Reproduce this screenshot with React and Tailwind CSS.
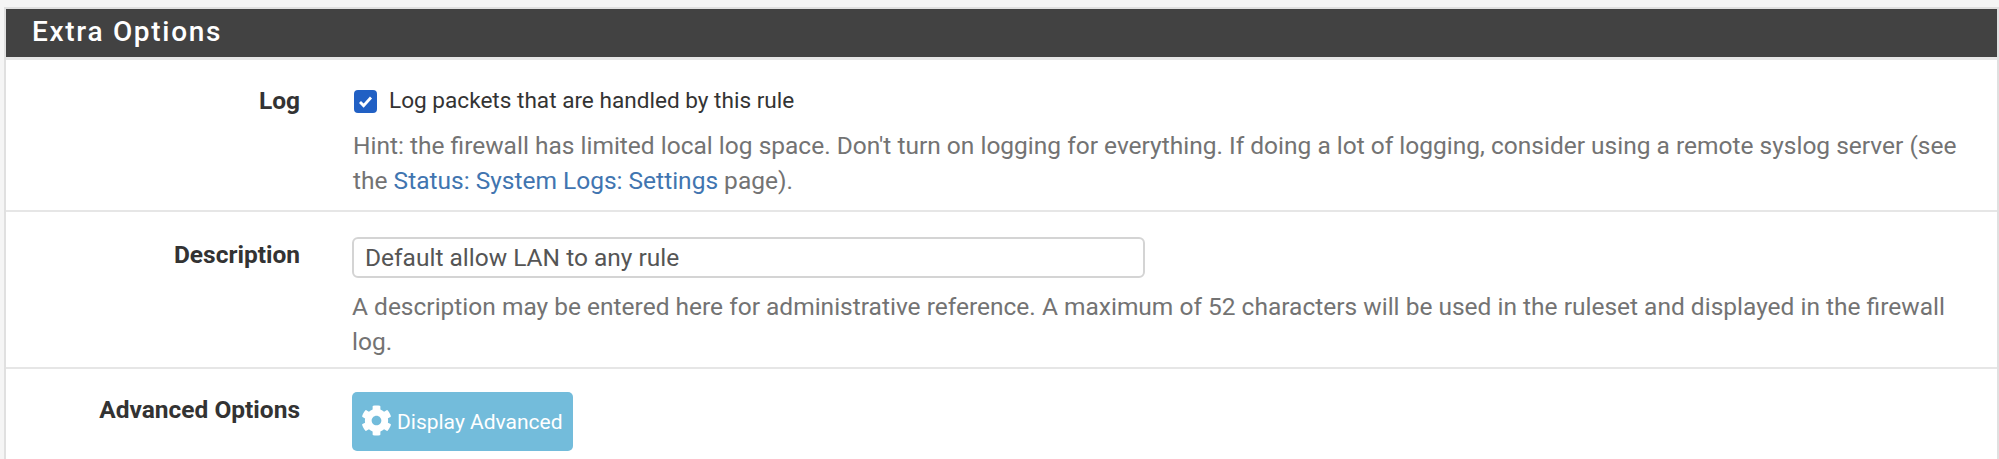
import { FaCog } from "react-icons/fa";

const font = "font-['Roboto',sans-serif]";

function Row({ label, labelClass, children, border = true, className }) {
  return (
    <div className={`flex ${border ? "border-b-2 border-[#e6e6e6]" : ""} ${className}`}>
      <div className={`w-[294px] shrink-0 text-right font-bold text-[24.5px] leading-[32px] text-[#333] ${labelClass}`}>{label}</div>
      <div className="ml-[52px] w-[1630px] min-w-0">{children}</div>
    </div>
  );
}

export default function App() {
  return (
    <div className={`w-[1999px] h-[459px] overflow-hidden bg-[#f5f5f5] pt-[7px] ${font}`}>
      <div className="ml-[4px] w-[1995px] border-x-2 border-t-2 border-[#e0e0e0] bg-white h-[460px]">
        <div className="h-[48px] bg-[#424242] pl-[26px] text-white text-[28px] leading-[46px] font-medium tracking-[1.7px]">Extra Options</div>
        <div className="h-[3px] bg-[#e6e6e6]" />
        <Row className="h-[152px] pt-[25px]" label="Log">
          <div className="flex items-center h-[32px] pl-[2px]">
            <span className="w-[23px] h-[23px] rounded-[4px] bg-[#2160c4] flex items-center justify-center">
              <svg width="15" height="13" viewBox="0 0 15 13" fill="none"><path d="M2 7l3.6 3.6L13 2.5" stroke="white" strokeWidth="2.8" /></svg>
            </span>
            <span className="ml-[12px] text-[22.6px] text-[#333]">Log packets that are handled by this rule</span>
          </div>
          <p className="mt-[11px] pl-[1px] text-[24.5px] leading-[35px] text-[#737373]">
            Hint: the firewall has limited local log space. Don't turn on logging for everything. If doing a lot of logging, consider using a remote syslog server (see
            <br />
            the <a className="text-[#4175b0]">Status: System Logs: Settings</a> page).
          </p>
        </Row>
        <Row className="h-[157px] pt-[27px]" label="Description">
          <div className="h-[41px] w-[793px] -mt-[2px] rounded-[6px] border-2 border-[#d4d4d4] pl-[11px] text-[24.5px] leading-[37px] text-[#555]">Default allow LAN to any rule</div>
          <p className="mt-[11px] text-[24.5px] leading-[35px] text-[#737373]">
            A description may be entered here for administrative reference. A maximum of 52 characters will be used in the ruleset and displayed in the firewall log.
          </p>
        </Row>
        <Row className="pt-[25px]" border={false} label="Advanced Options">
          <button className="h-[59px] w-[221px] -mt-[2px] rounded-[5px] bg-[#73bcdb] text-white text-[21px] flex items-center pl-[9px]">
            <FaCog className="w-[31px] h-[31px] -mt-[3px]" />
            <span className="ml-[5px] mt-[2px]">Display Advanced</span>
          </button>
        </Row>
      </div>
    </div>
  );
}
